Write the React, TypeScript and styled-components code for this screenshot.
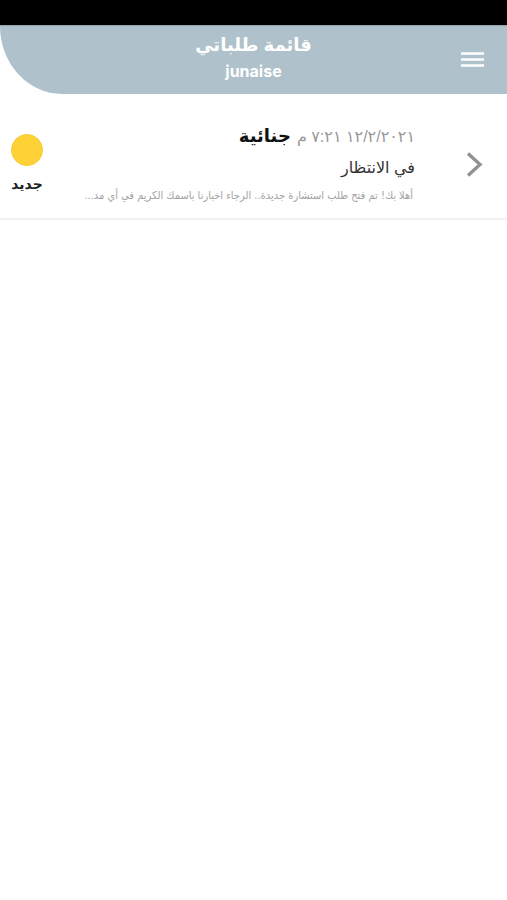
import React from "react";
import styled, { createGlobalStyle } from "styled-components";

const GlobalStyle = createGlobalStyle`
  * { box-sizing: border-box; }
  body {
    margin: 0;
    background: #fff;
    font-family: "Liberation Sans", "DejaVu Sans", sans-serif;
  }
  button { font: inherit; color: inherit; border: 0; padding: 0; background: none; cursor: pointer; }
`;

const Screen = styled.div`
  min-height: 100vh;
  background: #fff;
`;

const StatusBar = styled.div`
  height: 25px;
  background: #000;
`;

const Header = styled.header`
  display: grid;
  grid-template-columns: 1fr auto 1fr;
  align-items: center;
  height: 69px;
  padding: 0 20px;
  background: #afc1cb;
  border-top: 1px solid #94a3ab;
  border-bottom-left-radius: 62px 68px;
  color: #fff;
`;

const Heading = styled.div`
  grid-column: 2;
  padding-bottom: 6px;
  text-align: center;
`;

const Title = styled.h1`
  margin: 0;
  font-size: 18px;
  line-height: 28px;
  font-weight: 700;
`;

const UserName = styled.p`
  margin: 0;
  font: 700 16px/24px Inter, "Liberation Sans", sans-serif;
`;

const MenuButton = styled.button`
  justify-self: end;
  display: flex;
  width: 30px;
  height: 30px;
`;

const Requests = styled.ul`
  margin: 0;
  padding: 0;
  list-style: none;
`;

const Request = styled.li`
  border-bottom: 2px solid #f1f1f1;
`;

const RequestButton = styled.button`
  display: flex;
  align-items: center;
  width: 100%;
  height: 124px;
  padding: 16px 20px 0 8px;
  text-align: right;
`;

const State = styled.span`
  display: flex;
  flex-direction: column;
  align-items: center;
  gap: 8px;
  width: 38px;
`;

const Dot = styled.span`
  width: 32px;
  height: 32px;
  border: 1px solid #f9cc35;
  border-radius: 50%;
  background: #fed136;
`;

const StateLabel = styled.span`
  font-size: 14px;
  line-height: 20px;
  font-weight: 700;
  color: #222;
`;

const Details = styled.span`
  flex: 1;
  min-width: 0;
  margin: 0 48px 0 16px;
`;

const Line = styled.span<{ $size: number; $color: string; $height: number }>`
  display: block;
  white-space: nowrap;
  font-size: ${(p) => p.$size}px;
  line-height: ${(p) => p.$height}px;
  color: ${(p) => p.$color};
`;

const Summary = styled(Line)`
  display: flex;
  align-items: baseline;
  gap: 6px;
`;

const Message = styled(Line)`
  overflow: hidden;
  padding-right: 2px;
  text-overflow: ellipsis;
  font-family: "DejaVu Sans Condensed", "DejaVu Sans", sans-serif;
`;

const Category = styled.strong`
  font-size: 18px;
  color: #111;
`;

const Chevron = styled.svg`
  width: 24px;
  height: 30px;
`;

export default function App() {
  return (
    <Screen>
      <GlobalStyle />
      <StatusBar />
      <Header>
        <Heading>
          <Title lang="ar" dir="rtl">قائمة طلباتي</Title>
          <UserName>junaise</UserName>
        </Heading>
        <MenuButton aria-label="القائمة">
          <svg width="30" height="30" viewBox="0 0 30 30" fill="none" stroke="#fff" strokeWidth="2.6">
            <path d="M4 8.5h23M4 14.5h23M4 20.5h23" />
          </svg>
        </MenuButton>
      </Header>
      <main>
        <Requests>
          <Request>
            <RequestButton>
              <State>
                <Dot />
                <StateLabel lang="ar">جديد</StateLabel>
              </State>
              <Details lang="ar" dir="rtl">
                <Summary $size={16} $height={30} $color="#999">
                  <span>١٢/٢/٢٠٢١ ٧:٢١ م</span>
                  <Category>جنائية</Category>
                </Summary>
                <Line $size={16} $height={32} $color="#333">في الانتظار</Line>
                <Message $size={11} $height={24} $color="#a3a3a3">
                  أهلا بك! تم فتح طلب استشارة جديدة.. الرجاء اخبارنا باسمك الكريم في أي مد...
                </Message>
              </Details>
              <Chevron viewBox="0 0 24 30" fill="none" stroke="#929292" strokeWidth="3.4">
                <path d="M5 4.5 17 15.5 5 26.5" />
              </Chevron>
            </RequestButton>
          </Request>
        </Requests>
      </main>
    </Screen>
  );
}
